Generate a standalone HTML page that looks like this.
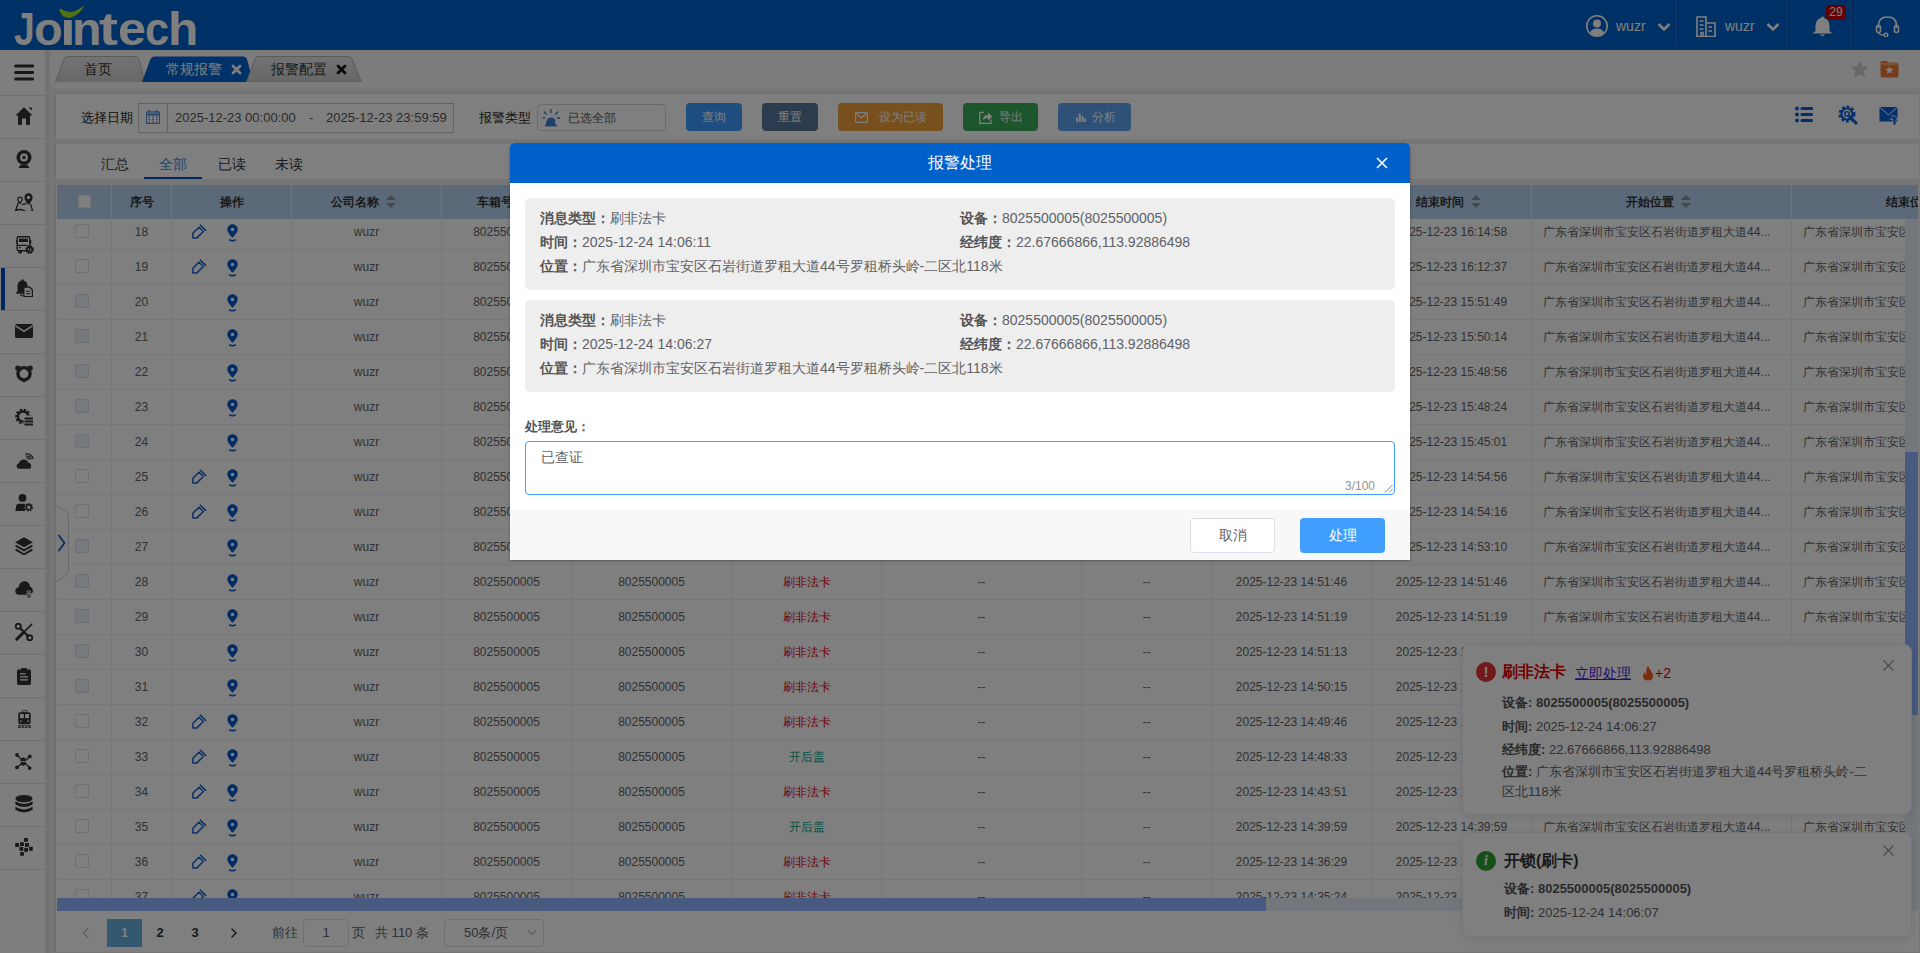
<!DOCTYPE html>
<html><head><meta charset="utf-8">
<style>
*{box-sizing:border-box;margin:0;padding:0}
html,body{width:1920px;height:953px;overflow:hidden}
body{font-family:"Liberation Sans",sans-serif;font-size:13px;color:#333;background:#ececec;position:relative}
.abs{position:absolute}
#header{left:0;top:0;width:1920px;height:50px;background:#0062cc}
#logo{position:absolute;left:0;top:-1.5px;color:#fff;font-weight:bold;font-size:46px;line-height:60px;white-space:nowrap}
.hdiv{position:absolute;top:0;width:2px;height:47px;background:#004cab;border-left:1px solid #1e6edc}
.hname{position:absolute;color:#fff;font-size:14px;top:18px}
#sidebar{left:0;top:50px;width:45px;height:903px;background:#fdfdfd}
#sidestrip{left:45px;top:50px;width:5px;height:903px;background:#e4e4e4}
.sitem{position:absolute;left:0;width:45px;height:43px;border-bottom:1px solid #dfe4ea}
.sitem svg{position:absolute}
.sitem.active:before{content:"";position:absolute;left:1px;top:0;width:4px;height:42px;background:#0050c0}
#tabbar{left:50px;top:50px;width:1870px;height:38px;background:#f8f8f8}
.tab{position:absolute;top:56px;height:26px;font-size:14px;line-height:26px;color:#333}
.tab svg{position:absolute;left:0;top:0}
.tab span{position:absolute;top:0;white-space:nowrap}
#panel1{left:55px;top:93px;width:1864px;height:46px;background:#fff;border-left:1px solid #d8d8d8;border-top:1px solid #dadada}
#panel2{left:55px;top:144px;width:1864px;height:35px;background:#fff;border-left:1px solid #d8d8d8}
#panel3{left:55px;top:185px;width:1864px;height:767px;background:#fff;border-left:1px solid #d8d8d8}
.lbl{position:absolute;font-size:13px;color:#222;top:109px;white-space:nowrap}
.btn{position:absolute;top:103px;height:28px;border-radius:4px;color:#fff;font-size:12px;text-align:center;line-height:28px;white-space:nowrap}
.btn svg{vertical-align:-2px;margin-right:6px}
.stab{position:absolute;top:156px;font-size:14px;color:#333}
#thead{position:absolute;left:57px;top:185px;width:1861px;height:34px;background:#b7d3f0;overflow:hidden}
.th{position:absolute;top:0;height:34px;line-height:34px;text-align:center;font-weight:bold;font-size:12px;color:#333;border-right:1px solid #e3ebf3;white-space:nowrap}
.sort{display:inline-block;position:relative;width:24px;height:14px;vertical-align:-3px}
.sort i{position:absolute;left:7px;width:0;height:0;border-left:5px solid transparent;border-right:5px solid transparent}
.sort .up{top:0;border-bottom:5px solid #8a8f96}
.sort .dn{top:8px;border-top:5px solid #8a8f96}
#tbody{position:absolute;left:57px;top:219px;width:1848px;height:679px;overflow:hidden;background:#fff}
.tr{position:absolute;left:0;width:2000px;height:35px;border-bottom:1px solid #ebeef5}
.td{position:absolute;top:0;height:34px;line-height:34px;text-align:center;font-size:12px;color:#606266;border-right:1px solid #ebeef5;white-space:nowrap;overflow:hidden}
.td.red{color:#e00000}
.td.green{color:#0aa58a}
.td.loc{text-align:left;padding-left:11px}
.cb{position:absolute;left:18px;top:9px;width:14px;height:14px;border:1px solid #dcdfe6;border-radius:2px;background:#fff}
.cb.dis{background:#edf2fc;border-color:#dcdfe6}
.hcb{left:20.5px;top:9.5px;width:13px;height:13px;border-color:#e8e8e8;background:#fff;border-radius:1px}
.ops{text-align:left}
.ops .pen{position:absolute;left:19.6px;top:9px}
.ops .pin{position:absolute;left:54.6px;top:8.6px}
.ops svg{display:block}
#vscroll{position:absolute;left:1905px;top:219px;width:13px;height:692px;background:#e6ecf6}
#vthumb{position:absolute;left:1905px;top:452px;width:13px;height:263px;background:#90b4fe}
#hscroll{position:absolute;left:57px;top:898px;width:1848px;height:13px;background:#e6ecf6}
#hthumb{position:absolute;left:57px;top:898px;width:1209px;height:13px;background:#90b4fe}
.pg{position:absolute;top:919px;height:28px;line-height:28px;font-size:13px;color:#333;text-align:center;white-space:nowrap}
#overlay{left:0;top:0;width:1920px;height:953px;background:rgba(0,0,0,.5)}
.notif{position:absolute;left:1462px;width:450px;background:#fff;border-radius:8px;box-shadow:0 2px 12px rgba(0,0,0,.1);border:1px solid #ebeef5}
.nico{position:absolute;left:13px;width:20px;height:20px;border-radius:50%;color:#fff;text-align:center;font-weight:bold}
.ntitle{position:absolute;font-size:16px;font-weight:bold;white-space:nowrap}
.nclose{position:absolute;left:420px}
.nline{position:absolute;left:39px;font-size:13px;color:#606266;white-space:nowrap}
.nline b{color:#555}
#modal{position:absolute;left:510px;top:143px;width:900px;height:417px;background:#fff;border-radius:4px 4px 0 0;box-shadow:0 1px 3px rgba(0,0,0,.3)}
#mhead{position:absolute;left:0;top:0;width:900px;height:40px;background:#0061cb;border-radius:4px 4px 0 0;color:#fff;font-size:16px;text-align:center;line-height:40px}
.card{position:absolute;left:15px;width:870px;height:92px;background:#eeeeee;border-radius:5px}
.cline{position:absolute;font-size:14px;color:#606266;white-space:nowrap;line-height:24px}
.cline b{color:#555}
#mfoot{position:absolute;left:0;top:367px;width:900px;height:50px;background:#f8f8f8}
.mbtn{position:absolute;top:8px;width:85px;height:35px;border-radius:4px;font-size:14px;text-align:center;line-height:33px}
</style></head><body>
<div id="header" class="abs">
  <div id="logo"><span style="position:absolute;left:14.2px;top:0;transform:scaleX(0.81);transform-origin:0 0">J</span><span style="position:absolute;left:33.5px;top:0;transform:scaleX(1.02);transform-origin:0 0">o</span><span style="position:absolute;left:59.5px;top:0;transform:scaleX(1.23);transform-origin:0 0">ı</span><span style="position:absolute;left:71.7px;top:0;transform:scaleX(1.05);transform-origin:0 0">n</span><span style="position:absolute;left:99.3px;top:0;transform:scaleX(1.24);transform-origin:0 0">t</span><span style="position:absolute;left:117.6px;top:0;transform:scaleX(1.1);transform-origin:0 0">e</span><span style="position:absolute;left:144.7px;top:0;transform:scaleX(0.94);transform-origin:0 0">c</span><span style="position:absolute;left:168.1px;top:0;transform:scaleX(1.08);transform-origin:0 0">h</span></div>
  <svg class="abs" style="left:57px;top:3px" width="30" height="17" viewBox="0 0 30 17"><path d="M2.5 8 Q1.5 5 4.5 6 Q8.5 9 13 9 Q20 8.5 27.5 2 Q23.5 11.5 13 15 Q5.5 15.5 2.5 8 Z" fill="#a8e028"/></svg>
  <!-- user -->
  <svg class="abs" style="left:1586px;top:15px" width="22" height="22" viewBox="0 0 22 22"><circle cx="11" cy="11" r="10.2" fill="none" stroke="#fff" stroke-width="1.6"/><circle cx="11" cy="8.5" r="4" fill="#fff"/><path d="M4 17.5 Q6 13.5 11 13.5 Q16 13.5 18 17.5 Q15 21 11 21 Q7 21 4 17.5 Z" fill="#fff"/></svg>
  <div class="hname" style="left:1616px">wuzr</div>
  <svg class="abs" style="left:1657px;top:22px" width="14" height="10" viewBox="0 0 14 10"><path d="M1.5 2 L7 7.5 L12.5 2" fill="none" stroke="#fff" stroke-width="2.6"/></svg>
  <div class="hdiv" style="left:1676px"></div>
  <svg class="abs" style="left:1696px;top:16px" width="20" height="21" viewBox="0 0 20 21"><path d="M1 20.5 V1 H10 V20.5 M10 7 H19 V20.5 M0 20.5 H20" fill="none" stroke="#fff" stroke-width="1.6"/><path d="M3.5 5 H7.5 M3.5 9 H7.5 M3.5 13 H7.5 M12.5 11 H16 M12.5 15 H16 M5 20 V16.5 H7 V20" stroke="#fff" stroke-width="1.5" fill="none"/></svg>
  <div class="hname" style="left:1725px">wuzr</div>
  <svg class="abs" style="left:1766px;top:22px" width="14" height="10" viewBox="0 0 14 10"><path d="M1.5 2 L7 7.5 L12.5 2" fill="none" stroke="#fff" stroke-width="2.6"/></svg>
  <div class="hdiv" style="left:1787px"></div>
  <svg class="abs" style="left:1811px;top:15px" width="23" height="22" viewBox="0 0 23 22"><path d="M11.5 1.5 Q13 1.5 13 3 Q18.5 4.5 18.5 11 L18.5 16 L21.5 18.5 L1.5 18.5 L4.5 16 L4.5 11 Q4.5 4.5 10 3 Q10 1.5 11.5 1.5 Z" fill="#fff"/><path d="M9 19.5 Q11.5 22.5 14 19.5 Z" fill="#fff"/></svg>
  <div class="abs" style="left:1826px;top:5px;width:20px;height:15px;border-radius:4px;background:#cc0000;color:#fff;font-size:12px;line-height:15px;text-align:center">29</div>
  <div class="hdiv" style="left:1851px"></div>
  <svg class="abs" style="left:1875px;top:15px" width="25" height="22" viewBox="0 0 25 22"><path d="M3.5 13 V10.5 Q3.5 2 12.5 2 Q21.5 2 21.5 10.5 V13" fill="none" stroke="#fff" stroke-width="1.7"/><rect x="1.5" y="10.5" width="4" height="7" rx="2" fill="none" stroke="#fff" stroke-width="1.6"/><rect x="19.5" y="10.5" width="4" height="7" rx="2" fill="none" stroke="#fff" stroke-width="1.6"/><path d="M3.5 17.5 Q4.5 20 9 20" fill="none" stroke="#fff" stroke-width="1.5"/><circle cx="11" cy="20" r="1.8" fill="none" stroke="#fff" stroke-width="1.4"/></svg>
</div>
<div id="sidebar" class="abs"><div class="sitem" style="top:0;height:46px"><svg style="left:14px;top:14px" width="20" height="17" viewBox="0 0 20 17"><path d="M1.7 2 H18.8 M1.7 8.5 H18.8 M1.7 15 H18.8" stroke="#333" stroke-width="3.1" stroke-linecap="round"/></svg></div><div class="sitem" style="top:46px"><svg style="left:15px;top:11px" width="18" height="18" viewBox="0 0 18 18"><path d="M9 0.3 L17.6 8.6 L15 8.6 L15 16.8 Q15 18 13.8 18 L12.2 18 Q11 18 11 16.8 L11 11.5 L7 11.5 L7 16.8 Q7 18 5.8 18 L4.2 18 Q3 18 3 16.8 L3 8.6 L0.4 8.6 Z" fill="#333"/><path d="M13.6 0.4 L16.8 0.4 L16.8 3.6 Z" fill="#333"/></svg></div><div class="sitem" style="top:89px"><svg style="left:16px;top:11px" width="16" height="18" viewBox="0 0 16 18"><circle cx="8" cy="7.5" r="7.5" fill="#333"/><circle cx="8" cy="7.5" r="3.9" fill="#fdfdfd"/><circle cx="8" cy="7.5" r="1.7" fill="#333"/><path d="M2.5 18 L4.5 15 L11.5 15 L13.5 18 Z" fill="#333"/></svg></div><div class="sitem" style="top:132px"><svg style="left:15px;top:11px" width="18" height="18" viewBox="0 0 18 18"><path d="M13.5 0.3 C11 0.3 9.4 2.2 9.4 4.5 C9.4 7.6 13.5 12 13.5 12 C13.5 12 17.6 7.6 17.6 4.5 C17.6 2.2 16 0.3 13.5 0.3 Z" fill="#333"/><circle cx="13.5" cy="4.5" r="1.7" fill="#fdfdfd"/><path d="M5 4.2 C3.7 4.2 2.8 5.1 2.8 6.3 C2.8 7.9 5 10.4 5 10.4 C5 10.4 7.2 7.9 7.2 6.3 C7.2 5.1 6.3 4.2 5 4.2 Z" fill="none" stroke="#333" stroke-width="1.3"/><path d="M3.3 9.8 L0.6 17.6 Q4.8 15.4 9 17.6 Q13.4 19.8 17.5 17.6 L15.6 10.8 M6.6 11 Q9 12 11.2 10.2" fill="none" stroke="#333" stroke-width="1.3"/></svg></div><div class="sitem" style="top:175px"><svg style="left:16px;top:11px" width="18" height="18" viewBox="0 0 18 18"><rect x="1.2" y="0.7" width="12.6" height="14" rx="1.4" fill="none" stroke="#333" stroke-width="1.4"/><rect x="3" y="2.6" width="9" height="3.4" fill="#333"/><path d="M0.3 4 V7.5 M14.7 4 V7.5" stroke="#333" stroke-width="1.2"/><path d="M1.5 9.3 H11 M3 11.7 H5" stroke="#333" stroke-width="1.3"/><rect x="2.4" y="14.6" width="3.4" height="2.8" rx="1" fill="#333"/><circle cx="13.6" cy="13.6" r="3.3" fill="none" stroke="#333" stroke-width="2.2" stroke-dasharray="1.6 1.0"/><circle cx="13.6" cy="13.6" r="2.6" fill="none" stroke="#333" stroke-width="1.5"/></svg></div><div class="sitem active" style="top:218px"><svg style="left:15px;top:11px" width="18" height="18" viewBox="0 0 18 18"><path d="M7.5 0.3 Q8.6 0.3 8.6 1.4 Q12.5 2.5 12.5 7 L12.5 9 L9 9 L9 14.8 L0.3 14.8 Q1.3 13.4 2.5 12.2 L2.5 7 Q2.5 2.5 6.4 1.4 Q6.4 0.3 7.5 0.3 Z" fill="#333"/><ellipse cx="6.3" cy="16.3" rx="1.3" ry="0.9" fill="#333"/><path d="M8.8 8.2 H14.8 L17.4 10.8 V17.6 H8.8 Z" fill="#fdfdfd" stroke="#333" stroke-width="1.3"/><path d="M11 12.3 H15.3 M11 14.8 H15.3" stroke="#333" stroke-width="1.1"/></svg></div><div class="sitem" style="top:261px"><svg style="left:15px;top:13px" width="18" height="14" viewBox="0 0 18 14"><rect x="0" y="0" width="18" height="14" rx="1.6" fill="#333"/><path d="M0.3 1.6 L9 7.4 L17.7 1.6" fill="none" stroke="#fdfdfd" stroke-width="1.4"/></svg></div><div class="sitem" style="top:304px"><svg style="left:15px;top:11px" width="18" height="18" viewBox="0 0 18 18"><circle cx="9" cy="8.8" r="6.1" fill="none" stroke="#333" stroke-width="3.3"/><circle cx="2.8" cy="3" r="2.6" fill="#333"/><circle cx="15.2" cy="3" r="2.6" fill="#333"/><path d="M5.8 14.5 L9 17.8 L12.2 14.5 Z" fill="#333"/></svg></div><div class="sitem" style="top:347px"><svg style="left:15px;top:11px" width="18" height="18" viewBox="0 0 18 18"><circle cx="8" cy="8.5" r="6.3" fill="none" stroke="#333" stroke-width="3" stroke-dasharray="2.2 1.5"/><circle cx="8" cy="8.5" r="5" fill="none" stroke="#333" stroke-width="2.4"/><rect x="8.5" y="7.5" width="10" height="11" fill="#fdfdfd"/><path d="M9.5 10.5 H18 M9.5 13.5 H18 M9.5 16.6 H18" stroke="#333" stroke-width="2"/></svg></div><div class="sitem" style="top:390px"><svg style="left:15px;top:11px" width="19" height="18" viewBox="0 0 19 18"><path d="M4.5 17.8 Q1.6 17.8 1.6 15 Q1.6 12.6 4 12.2 Q5 8.5 8.6 8.5 Q12.2 8.5 13.2 11.7 Q16.2 11.9 16.2 14.9 Q16.2 17.8 13.2 17.8 Z" fill="#333"/><path d="M11.35 7.1 A2.5 2.5 0 0 1 14.4 8.85 M10.84 5.15 A4.5 4.5 0 0 1 16.35 8.34 M10.4 3.2 A6.3 6.3 0 0 1 18.2 7.9" fill="none" stroke="#333" stroke-width="1.2"/></svg></div><div class="sitem" style="top:433px"><svg style="left:15px;top:11px" width="18" height="18" viewBox="0 0 18 18"><circle cx="7.5" cy="3.9" r="3.9" fill="#333"/><path d="M0.3 17 L1.2 11.8 Q1.6 9.8 3.8 9.8 L10.5 9.8 L10 17 Z" fill="#333"/><circle cx="13.8" cy="13.2" r="4.2" fill="#fdfdfd"/><circle cx="13.8" cy="13.2" r="3.3" fill="none" stroke="#333" stroke-width="2" stroke-dasharray="1.5 1.0"/><circle cx="13.8" cy="13.2" r="2.4" fill="none" stroke="#333" stroke-width="1.4"/></svg></div><div class="sitem" style="top:476px"><svg style="left:15px;top:11px" width="18" height="18" viewBox="0 0 18 18"><path d="M9 0.2 L18 5.2 L9 10.2 L0 5.2 Z" fill="#333"/><path d="M0.6 8.6 L9 13.3 L17.4 8.6 M0.6 12.6 L9 17.3 L17.4 12.6" fill="none" stroke="#333" stroke-width="1.9"/></svg></div><div class="sitem" style="top:519px"><svg style="left:15px;top:11.6px" width="18" height="17" viewBox="0 0 18 17"><path d="M4 13.8 Q0.3 13.8 0.3 10 Q0.3 6.6 3.6 6.2 Q4.6 0.3 9.6 0.3 Q14.4 0.3 15 5.8 Q17.7 6.5 17.7 9.8 Q17.7 13.8 13.5 13.8 Z" fill="#333"/><path d="M12 10.5 L16 10.5 M12 10.5 L14 15 M16 10.5 L14 15" stroke="#fdfdfd" stroke-width="2.6"/><circle cx="12" cy="10.5" r="1.4" fill="none" stroke="#333" stroke-width="0.9"/><circle cx="16" cy="10.5" r="1.4" fill="none" stroke="#333" stroke-width="0.9"/><circle cx="14" cy="15" r="1.4" fill="none" stroke="#333" stroke-width="0.9"/></svg></div><div class="sitem" style="top:562px"><svg style="left:15px;top:11px" width="18" height="18" viewBox="0 0 18 18"><path d="M4.5 4.5 L14 14" stroke="#333" stroke-width="2.4"/><circle cx="3.3" cy="3.3" r="2.6" fill="none" stroke="#333" stroke-width="1.9"/><circle cx="14.7" cy="14.7" r="2.6" fill="none" stroke="#333" stroke-width="1.9"/><path d="M1.8 16.3 L8 10" stroke="#333" stroke-width="3" stroke-linecap="round"/><path d="M9.5 8.5 L16.6 1.4" stroke="#333" stroke-width="1.7" stroke-linecap="round"/></svg></div><div class="sitem" style="top:605px"><svg style="left:17px;top:12.7px" width="14" height="17" viewBox="0 0 14 17"><rect x="0" y="1.3" width="14" height="15.7" rx="1.8" fill="#333"/><rect x="4" y="0" width="6" height="2.4" rx="0.8" fill="#333"/><path d="M3.2 1.9 H4 M10 1.9 H10.8" stroke="#fdfdfd" stroke-width="0.8"/><path d="M3 5.8 H8.5 M3 8.9 H11 M3 11.9 H11" stroke="#fdfdfd" stroke-width="1.3"/></svg></div><div class="sitem" style="top:648px"><svg style="left:18px;top:11.7px" width="13" height="18" viewBox="0 0 13 18"><rect x="4.2" y="0.3" width="4.6" height="2.6" rx="1.2" fill="none" stroke="#333" stroke-width="1"/><rect x="0.3" y="2.3" width="12.4" height="12" rx="1.8" fill="#333"/><rect x="2" y="4" width="3.8" height="4.2" fill="#fdfdfd"/><rect x="7.2" y="4" width="3.8" height="4.2" fill="#fdfdfd"/><rect x="2" y="10.5" width="1.8" height="1.3" fill="#fdfdfd"/><rect x="9.2" y="10.5" width="1.8" height="1.3" fill="#fdfdfd"/><path d="M0 15.8 H13 M0 17.3 H13" stroke="#333" stroke-width="1.1"/><path d="M3.5 15 V18 M6.5 15 V18 M9.5 15 V18" stroke="#fdfdfd" stroke-width="0.6"/></svg></div><div class="sitem" style="top:691px"><svg style="left:15px;top:12px" width="17" height="17" viewBox="0 0 17 17"><path d="M2 2 L15 15 M15 3.5 L2 14.5" stroke="#333" stroke-width="1.3"/><circle cx="2" cy="2" r="1.9" fill="#333"/><circle cx="14.8" cy="3.4" r="1.9" fill="#333"/><circle cx="2" cy="14.4" r="1.9" fill="#333"/><circle cx="14.6" cy="15.1" r="1.9" fill="#333"/><ellipse cx="8.3" cy="8.6" rx="2.8" ry="4.1" fill="#333"/><path d="M5.5 8.6 H11.1" stroke="#fdfdfd" stroke-width="0.9"/></svg></div><div class="sitem" style="top:734px"><svg style="left:15px;top:10.6px" width="18" height="19" viewBox="0 0 18 19"><ellipse cx="9" cy="3.6" rx="8.6" ry="3.6" fill="#333"/><path d="M0.4 6.3 Q9 11.5 17.6 6.3 L17.6 9.6 Q9 14.6 0.4 9.6 Z M0.4 11.8 Q9 17 17.6 11.8 L17.6 14.8 Q9 20 0.4 14.8 Z" fill="#333"/></svg></div><div class="sitem" style="top:777px"><svg style="left:15px;top:11px" width="18" height="18" viewBox="0 0 18 18"><g fill="#333"><rect x="9" y="0" width="3.9" height="3.8"/><rect x="0.2" y="5" width="3.8" height="3.9"/><rect x="5" y="4.3" width="3.9" height="3.8"/><rect x="10" y="5" width="4" height="3.9"/><rect x="4.4" y="9" width="3.9" height="3.8"/><rect x="9.2" y="9.9" width="3.8" height="3.9"/><rect x="14.1" y="8.8" width="3.7" height="3.9"/><rect x="5.2" y="14" width="3.7" height="3.8"/></g></svg></div></div>
<div id="sidestrip" class="abs"></div>
<div id="tabbar" class="abs"></div>
<!-- tabs -->
<div class="tab" style="left:55px;width:90px">
  <svg width="90" height="26" viewBox="0 0 90 26"><path d="M0.5 26 L9 3 Q10 0.5 13 0.5 L80 0.5 Q83 0.5 84 3 L90 26 Z" fill="#dcdcdc" stroke="#b5b5b5"/><defs><linearGradient id="g1" x1="0" y1="0" x2="0" y2="1"><stop offset="0" stop-color="#e6e6e6"/><stop offset="1" stop-color="#cfcfcf"/></linearGradient></defs><path d="M1 26 L9.5 3.2 Q10.5 1 13 1 L80 1 Q82.5 1 83.5 3.2 L89.5 26 Z" fill="url(#g1)"/></svg>
  <span style="left:29px">首页</span>
</div>
<div class="tab" style="left:142px;width:110px">
  <svg width="110" height="26" viewBox="0 0 110 26"><path d="M0 26 L8.5 3 Q9.5 0.5 12.5 0.5 L101 0.5 Q104 0.5 105 3 L109.5 20 Q110 26 104 26 Z" fill="#0063d1"/></svg>
  <span style="left:23.5px;color:#fff">常规报警</span>
  <svg style="left:89px;top:8px" width="11" height="11" viewBox="0 0 11 11"><path d="M2 2 L9 9 M9 2 L2 9" stroke="#fff" stroke-width="2.8" stroke-linecap="round"/></svg>
</div>
<div class="tab" style="left:246px;width:116px">
  <svg width="116" height="26" viewBox="0 0 116 26"><defs><linearGradient id="g2" x1="0" y1="0" x2="0" y2="1"><stop offset="0" stop-color="#e6e6e6"/><stop offset="1" stop-color="#cfcfcf"/></linearGradient></defs><path d="M0.5 26 L9 3 Q10 0.5 13 0.5 L102 0.5 Q105 0.5 106 3 L115.5 26 Z" fill="url(#g2)" stroke="#b5b5b5"/></svg>
  <span style="left:25px">报警配置</span>
  <svg style="left:90px;top:8px" width="11" height="11" viewBox="0 0 11 11"><path d="M2 2 L9 9 M9 2 L2 9" stroke="#111" stroke-width="2.8" stroke-linecap="round"/></svg>
</div>
<svg class="abs" style="left:1850px;top:60px" width="19" height="18" viewBox="0 0 19 18"><path d="M9.5 0.5 L12 6.3 L18.5 6.8 L13.5 11 L15.2 17.5 L9.5 14 L3.8 17.5 L5.5 11 L0.5 6.8 L7 6.3 Z" fill="#cfcfcf"/></svg>
<svg class="abs" style="left:1880px;top:60px" width="19" height="18" viewBox="0 0 19 18"><path d="M0.5 3 Q0.5 1 2.5 1 L7 1 L8.5 2.5 L16.5 2.5 Q18.5 2.5 18.5 4.5 L18.5 15.5 Q18.5 17.5 16.5 17.5 L2.5 17.5 Q0.5 17.5 0.5 15.5 Z" fill="#f07838"/><path d="M0.5 4 H18.5" stroke="#ffd9a8" stroke-width="1"/><path d="M9.5 6 L10.7 8.8 L13.6 9 L11.3 10.9 L12.1 13.8 L9.5 12.2 L6.9 13.8 L7.7 10.9 L5.4 9 L8.3 8.8 Z" fill="#fff"/></svg>
<div id="panel1" class="abs"></div>
<div class="lbl" style="left:81px">选择日期</div>
<div class="abs" style="left:138px;top:103px;width:316px;height:30px;border:1px solid #c6c6c6;background:#fff"></div>
<div class="abs" style="left:167px;top:104px;width:1px;height:28px;background:#c6c6c6"></div>
<svg class="abs" style="left:146px;top:110px" width="14" height="14" viewBox="0 0 14 14"><rect x="0.5" y="2" width="13" height="11.5" fill="none" stroke="#4a8ad8" stroke-width="1"/><path d="M0.5 4.5 H13.5" stroke="#4a8ad8" stroke-width="2"/><circle cx="3.5" cy="1.5" r="1.2" fill="#4a8ad8"/><circle cx="10.5" cy="1.5" r="1.2" fill="#4a8ad8"/><path d="M2.5 7 H4 M6.2 7 H7.8 M10 7 H11.5 M2.5 9.5 H4 M6.2 9.5 H7.8 M10 9.5 H11.5 M2.5 12 H4 M6.2 12 H7.8 M10 12 H11.5" stroke="#4a8ad8" stroke-width="1.3"/></svg>
<div class="abs" style="left:175px;top:110px;font-size:13px;color:#555;white-space:nowrap">2025-12-23 00:00:00</div>
<div class="abs" style="left:309px;top:110px;font-size:13px;color:#555">-</div>
<div class="abs" style="left:326px;top:110px;font-size:13px;color:#555;white-space:nowrap">2025-12-23 23:59:59</div>
<div class="lbl" style="left:479px">报警类型</div>
<div class="abs" style="left:537px;top:104px;width:129px;height:27px;border:1px solid #d5d5d5;border-radius:4px;background:#fff"></div>
<svg class="abs" style="left:542px;top:108px" width="19" height="19" viewBox="0 0 19 19"><path d="M4 17 Q4 9.5 9 9.5 Q13.5 9.5 13.5 14 L13.5 17 Z" fill="#3d7fd4"/><path d="M3 17.5 H15" stroke="#3d7fd4" stroke-width="1.8"/><path d="M9 1 V5 M2 3.5 L4.5 6.5 M16 3.5 L13.5 6.5 M0.5 10 H3 M15 10 H18" stroke="#3d7fd4" stroke-width="1.4"/><path d="M13 12 H17 M13 14 H17 M13 16 H17" stroke="#fff" stroke-width="0.8"/></svg>
<div class="abs" style="left:568px;top:109.5px;font-size:12px;color:#555;white-space:nowrap">已选全部</div>
<div class="btn" style="left:686px;width:56px;background:#3d9bff">查询</div>
<div class="btn" style="left:762px;width:56px;background:#58769b">重置</div>
<div class="btn" style="left:838px;width:105px;background:#eea13c"><svg class="abs" style="left:17px;top:9px" width="13" height="11" viewBox="0 0 13 11"><rect x="0.6" y="0.6" width="11.8" height="9.8" rx="1" fill="none" stroke="#fff" stroke-width="1.2"/><path d="M0.8 1.2 L6.5 5.8 L12.2 1.2" fill="none" stroke="#fff" stroke-width="1.2"/></svg><span class="abs" style="left:41px;top:0">设为已读</span></div>
<div class="btn" style="left:963px;width:75px;background:#3aab58"><svg class="abs" style="left:16px;top:8px" width="14" height="13" viewBox="0 0 14 13"><path d="M5 1.3 H0.7 V12.3 H12 V8.5" fill="none" stroke="#fff" stroke-width="1.3"/><path d="M3.8 9 Q4 4 9 4 V1.5 L13.5 5.5 L9 9.5 V7 Q5.8 7 3.8 9 Z" fill="#fff"/></svg><span class="abs" style="left:36px;top:0">导出</span></div>
<div class="btn" style="left:1058px;width:73px;background:#5fa3f0"><svg class="abs" style="left:17.5px;top:10px" width="10" height="9" viewBox="0 0 10 9"><path d="M1 9 V4.5 M3.8 9 V0.5 M6.6 9 V3 M9.2 9 V5.5" stroke="#fff" stroke-width="2"/></svg><span class="abs" style="left:34px;top:0">分析</span></div>
<svg class="abs" style="left:1795px;top:106px" width="18" height="17" viewBox="0 0 18 17"><circle cx="2" cy="2.5" r="2" fill="#0d5fd1"/><circle cx="2" cy="8.5" r="2" fill="#0d5fd1"/><circle cx="2" cy="14.5" r="2" fill="#0d5fd1"/><path d="M7 2.5 H16.5 M7 8.5 H16.5 M7 14.5 H16.5" stroke="#0d5fd1" stroke-width="3.2" stroke-linecap="round"/></svg>
<svg class="abs" style="left:1838px;top:105px" width="21" height="20" viewBox="0 0 21 20"><circle cx="9" cy="9" r="6.8" fill="none" stroke="#0d5fd1" stroke-width="3.4" stroke-dasharray="2.6 1.9"/><circle cx="9" cy="9" r="5.5" fill="none" stroke="#0d5fd1" stroke-width="2.2"/><circle cx="9" cy="9" r="2.2" fill="none" stroke="#0d5fd1" stroke-width="1.6"/><path d="M11 11 L19 19" stroke="#0d5fd1" stroke-width="3"/></svg>
<svg class="abs" style="left:1879px;top:106px" width="20" height="19" viewBox="0 0 20 19"><rect x="0.5" y="1" width="18" height="14.5" fill="#0d5fd1"/><path d="M0.5 1 L9.5 9 L18.5 1" fill="none" stroke="#fff" stroke-width="1"/><path d="M14 9 L19.5 13.5 L17 13.5 L17 19 L14 19 L14 13.5 L11.5 13.5 Z" fill="#0d5fd1" stroke="#fff" stroke-width="0.8"/></svg>

<div id="panel2" class="abs"></div><div id="panel3" class="abs"></div>
<div class="stab" style="left:101px">汇总</div>
<div class="stab" style="left:159px;color:#3a8ee6">全部</div>
<div class="stab" style="left:218px">已读</div>
<div class="stab" style="left:275px">未读</div>
<div class="abs" style="left:144px;top:177px;width:58px;height:2px;background:#0050c0"></div>
<div id="thead"><div class="th" style="left:0px;width:55px"><span class="cb hcb"></span></div><div class="th" style="left:55px;width:60px">序号</div><div class="th" style="left:115px;width:120px">操作</div><div class="th" style="left:235px;width:150px">公司名称<span class="sort"><i class="up"></i><i class="dn"></i></span></div><div class="th" style="left:385px;width:130px">车箱号<span class="sort"><i class="up"></i><i class="dn"></i></span></div><div class="th" style="left:515px;width:160px">设备号<span class="sort"><i class="up"></i><i class="dn"></i></span></div><div class="th" style="left:675px;width:150px">报警类型</div><div class="th" style="left:825px;width:200px">报警内容</div><div class="th" style="left:1025px;width:130px">处理人</div><div class="th" style="left:1155px;width:160px">开始时间<span class="sort"><i class="up"></i><i class="dn"></i></span></div><div class="th" style="left:1315px;width:160px">结束时间<span class="sort"><i class="up"></i><i class="dn"></i></span></div><div class="th" style="left:1475px;width:260px">开始位置<span class="sort"><i class="up"></i><i class="dn"></i></span></div><div class="th" style="left:1735px;width:260px">结束位置<span class="sort"><i class="up"></i><i class="dn"></i></span></div></div>
<div id="tbody"><div class="tr" style="top:-4px"><div class="td" style="left:0;width:55px"><span class="cb"></span></div><div class="td" style="left:55px;width:60px">18</div><div class="td ops" style="left:115px;width:120px"><span class="pen"><svg width="15" height="15" viewBox="0 0 15 15"><path d="M0.9 9.3 L7 3.2 L11.3 7.5 L4.7 14.1 L0.9 14.1 Z" fill="none" stroke="#1260d0" stroke-width="1.5" stroke-linejoin="round"/><path d="M8.4 1.2 L13.6 6.4" stroke="#1260d0" stroke-width="1.6" stroke-linecap="round"/></svg></span><span class="pin"><svg width="11" height="18" viewBox="0 0 11 18"><path d="M5.5 0.3 C2.5 0.3 0.3 2.6 0.3 5.5 C0.3 8.6 5.5 13.8 5.5 13.8 C5.5 13.8 10.7 8.6 10.7 5.5 C10.7 2.6 8.5 0.3 5.5 0.3 Z" fill="#0858c8"/><circle cx="5.5" cy="5.5" r="1.7" fill="#fff"/><path d="M2.2 15.6 Q5.5 17.9 8.8 15.6" stroke="#0858c8" stroke-width="1.6" fill="none"/></svg></span></div><div class="td" style="left:235px;width:150px">wuzr</div><div class="td" style="left:385px;width:130px">8025500005</div><div class="td" style="left:515px;width:160px">8025500005</div><div class="td red" style="left:675px;width:150px">刷非法卡</div><div class="td" style="left:825px;width:200px">--</div><div class="td" style="left:1025px;width:130px">--</div><div class="td" style="left:1155px;width:160px">2025-12-23 16:14:58</div><div class="td" style="left:1315px;width:160px">2025-12-23 16:14:58</div><div class="td loc" style="left:1475px;width:260px">广东省深圳市宝安区石岩街道罗租大道44...</div><div class="td loc" style="left:1735px;width:260px">广东省深圳市宝安区石岩街道罗租大道44...</div></div><div class="tr" style="top:31px"><div class="td" style="left:0;width:55px"><span class="cb"></span></div><div class="td" style="left:55px;width:60px">19</div><div class="td ops" style="left:115px;width:120px"><span class="pen"><svg width="15" height="15" viewBox="0 0 15 15"><path d="M0.9 9.3 L7 3.2 L11.3 7.5 L4.7 14.1 L0.9 14.1 Z" fill="none" stroke="#1260d0" stroke-width="1.5" stroke-linejoin="round"/><path d="M8.4 1.2 L13.6 6.4" stroke="#1260d0" stroke-width="1.6" stroke-linecap="round"/></svg></span><span class="pin"><svg width="11" height="18" viewBox="0 0 11 18"><path d="M5.5 0.3 C2.5 0.3 0.3 2.6 0.3 5.5 C0.3 8.6 5.5 13.8 5.5 13.8 C5.5 13.8 10.7 8.6 10.7 5.5 C10.7 2.6 8.5 0.3 5.5 0.3 Z" fill="#0858c8"/><circle cx="5.5" cy="5.5" r="1.7" fill="#fff"/><path d="M2.2 15.6 Q5.5 17.9 8.8 15.6" stroke="#0858c8" stroke-width="1.6" fill="none"/></svg></span></div><div class="td" style="left:235px;width:150px">wuzr</div><div class="td" style="left:385px;width:130px">8025500005</div><div class="td" style="left:515px;width:160px">8025500005</div><div class="td red" style="left:675px;width:150px">刷非法卡</div><div class="td" style="left:825px;width:200px">--</div><div class="td" style="left:1025px;width:130px">--</div><div class="td" style="left:1155px;width:160px">2025-12-23 16:12:37</div><div class="td" style="left:1315px;width:160px">2025-12-23 16:12:37</div><div class="td loc" style="left:1475px;width:260px">广东省深圳市宝安区石岩街道罗租大道44...</div><div class="td loc" style="left:1735px;width:260px">广东省深圳市宝安区石岩街道罗租大道44...</div></div><div class="tr" style="top:66px"><div class="td" style="left:0;width:55px"><span class="cb dis"></span></div><div class="td" style="left:55px;width:60px">20</div><div class="td ops" style="left:115px;width:120px"><span class="pin"><svg width="11" height="18" viewBox="0 0 11 18"><path d="M5.5 0.3 C2.5 0.3 0.3 2.6 0.3 5.5 C0.3 8.6 5.5 13.8 5.5 13.8 C5.5 13.8 10.7 8.6 10.7 5.5 C10.7 2.6 8.5 0.3 5.5 0.3 Z" fill="#0858c8"/><circle cx="5.5" cy="5.5" r="1.7" fill="#fff"/><path d="M2.2 15.6 Q5.5 17.9 8.8 15.6" stroke="#0858c8" stroke-width="1.6" fill="none"/></svg></span></div><div class="td" style="left:235px;width:150px">wuzr</div><div class="td" style="left:385px;width:130px">8025500005</div><div class="td" style="left:515px;width:160px">8025500005</div><div class="td red" style="left:675px;width:150px">刷非法卡</div><div class="td" style="left:825px;width:200px">--</div><div class="td" style="left:1025px;width:130px">--</div><div class="td" style="left:1155px;width:160px">2025-12-23 15:51:49</div><div class="td" style="left:1315px;width:160px">2025-12-23 15:51:49</div><div class="td loc" style="left:1475px;width:260px">广东省深圳市宝安区石岩街道罗租大道44...</div><div class="td loc" style="left:1735px;width:260px">广东省深圳市宝安区石岩街道罗租大道44...</div></div><div class="tr" style="top:101px"><div class="td" style="left:0;width:55px"><span class="cb dis"></span></div><div class="td" style="left:55px;width:60px">21</div><div class="td ops" style="left:115px;width:120px"><span class="pin"><svg width="11" height="18" viewBox="0 0 11 18"><path d="M5.5 0.3 C2.5 0.3 0.3 2.6 0.3 5.5 C0.3 8.6 5.5 13.8 5.5 13.8 C5.5 13.8 10.7 8.6 10.7 5.5 C10.7 2.6 8.5 0.3 5.5 0.3 Z" fill="#0858c8"/><circle cx="5.5" cy="5.5" r="1.7" fill="#fff"/><path d="M2.2 15.6 Q5.5 17.9 8.8 15.6" stroke="#0858c8" stroke-width="1.6" fill="none"/></svg></span></div><div class="td" style="left:235px;width:150px">wuzr</div><div class="td" style="left:385px;width:130px">8025500005</div><div class="td" style="left:515px;width:160px">8025500005</div><div class="td red" style="left:675px;width:150px">刷非法卡</div><div class="td" style="left:825px;width:200px">--</div><div class="td" style="left:1025px;width:130px">--</div><div class="td" style="left:1155px;width:160px">2025-12-23 15:50:14</div><div class="td" style="left:1315px;width:160px">2025-12-23 15:50:14</div><div class="td loc" style="left:1475px;width:260px">广东省深圳市宝安区石岩街道罗租大道44...</div><div class="td loc" style="left:1735px;width:260px">广东省深圳市宝安区石岩街道罗租大道44...</div></div><div class="tr" style="top:136px"><div class="td" style="left:0;width:55px"><span class="cb dis"></span></div><div class="td" style="left:55px;width:60px">22</div><div class="td ops" style="left:115px;width:120px"><span class="pin"><svg width="11" height="18" viewBox="0 0 11 18"><path d="M5.5 0.3 C2.5 0.3 0.3 2.6 0.3 5.5 C0.3 8.6 5.5 13.8 5.5 13.8 C5.5 13.8 10.7 8.6 10.7 5.5 C10.7 2.6 8.5 0.3 5.5 0.3 Z" fill="#0858c8"/><circle cx="5.5" cy="5.5" r="1.7" fill="#fff"/><path d="M2.2 15.6 Q5.5 17.9 8.8 15.6" stroke="#0858c8" stroke-width="1.6" fill="none"/></svg></span></div><div class="td" style="left:235px;width:150px">wuzr</div><div class="td" style="left:385px;width:130px">8025500005</div><div class="td" style="left:515px;width:160px">8025500005</div><div class="td red" style="left:675px;width:150px">刷非法卡</div><div class="td" style="left:825px;width:200px">--</div><div class="td" style="left:1025px;width:130px">--</div><div class="td" style="left:1155px;width:160px">2025-12-23 15:48:56</div><div class="td" style="left:1315px;width:160px">2025-12-23 15:48:56</div><div class="td loc" style="left:1475px;width:260px">广东省深圳市宝安区石岩街道罗租大道44...</div><div class="td loc" style="left:1735px;width:260px">广东省深圳市宝安区石岩街道罗租大道44...</div></div><div class="tr" style="top:171px"><div class="td" style="left:0;width:55px"><span class="cb dis"></span></div><div class="td" style="left:55px;width:60px">23</div><div class="td ops" style="left:115px;width:120px"><span class="pin"><svg width="11" height="18" viewBox="0 0 11 18"><path d="M5.5 0.3 C2.5 0.3 0.3 2.6 0.3 5.5 C0.3 8.6 5.5 13.8 5.5 13.8 C5.5 13.8 10.7 8.6 10.7 5.5 C10.7 2.6 8.5 0.3 5.5 0.3 Z" fill="#0858c8"/><circle cx="5.5" cy="5.5" r="1.7" fill="#fff"/><path d="M2.2 15.6 Q5.5 17.9 8.8 15.6" stroke="#0858c8" stroke-width="1.6" fill="none"/></svg></span></div><div class="td" style="left:235px;width:150px">wuzr</div><div class="td" style="left:385px;width:130px">8025500005</div><div class="td" style="left:515px;width:160px">8025500005</div><div class="td red" style="left:675px;width:150px">刷非法卡</div><div class="td" style="left:825px;width:200px">--</div><div class="td" style="left:1025px;width:130px">--</div><div class="td" style="left:1155px;width:160px">2025-12-23 15:48:24</div><div class="td" style="left:1315px;width:160px">2025-12-23 15:48:24</div><div class="td loc" style="left:1475px;width:260px">广东省深圳市宝安区石岩街道罗租大道44...</div><div class="td loc" style="left:1735px;width:260px">广东省深圳市宝安区石岩街道罗租大道44...</div></div><div class="tr" style="top:206px"><div class="td" style="left:0;width:55px"><span class="cb dis"></span></div><div class="td" style="left:55px;width:60px">24</div><div class="td ops" style="left:115px;width:120px"><span class="pin"><svg width="11" height="18" viewBox="0 0 11 18"><path d="M5.5 0.3 C2.5 0.3 0.3 2.6 0.3 5.5 C0.3 8.6 5.5 13.8 5.5 13.8 C5.5 13.8 10.7 8.6 10.7 5.5 C10.7 2.6 8.5 0.3 5.5 0.3 Z" fill="#0858c8"/><circle cx="5.5" cy="5.5" r="1.7" fill="#fff"/><path d="M2.2 15.6 Q5.5 17.9 8.8 15.6" stroke="#0858c8" stroke-width="1.6" fill="none"/></svg></span></div><div class="td" style="left:235px;width:150px">wuzr</div><div class="td" style="left:385px;width:130px">8025500005</div><div class="td" style="left:515px;width:160px">8025500005</div><div class="td red" style="left:675px;width:150px">刷非法卡</div><div class="td" style="left:825px;width:200px">--</div><div class="td" style="left:1025px;width:130px">--</div><div class="td" style="left:1155px;width:160px">2025-12-23 15:45:01</div><div class="td" style="left:1315px;width:160px">2025-12-23 15:45:01</div><div class="td loc" style="left:1475px;width:260px">广东省深圳市宝安区石岩街道罗租大道44...</div><div class="td loc" style="left:1735px;width:260px">广东省深圳市宝安区石岩街道罗租大道44...</div></div><div class="tr" style="top:241px"><div class="td" style="left:0;width:55px"><span class="cb"></span></div><div class="td" style="left:55px;width:60px">25</div><div class="td ops" style="left:115px;width:120px"><span class="pen"><svg width="15" height="15" viewBox="0 0 15 15"><path d="M0.9 9.3 L7 3.2 L11.3 7.5 L4.7 14.1 L0.9 14.1 Z" fill="none" stroke="#1260d0" stroke-width="1.5" stroke-linejoin="round"/><path d="M8.4 1.2 L13.6 6.4" stroke="#1260d0" stroke-width="1.6" stroke-linecap="round"/></svg></span><span class="pin"><svg width="11" height="18" viewBox="0 0 11 18"><path d="M5.5 0.3 C2.5 0.3 0.3 2.6 0.3 5.5 C0.3 8.6 5.5 13.8 5.5 13.8 C5.5 13.8 10.7 8.6 10.7 5.5 C10.7 2.6 8.5 0.3 5.5 0.3 Z" fill="#0858c8"/><circle cx="5.5" cy="5.5" r="1.7" fill="#fff"/><path d="M2.2 15.6 Q5.5 17.9 8.8 15.6" stroke="#0858c8" stroke-width="1.6" fill="none"/></svg></span></div><div class="td" style="left:235px;width:150px">wuzr</div><div class="td" style="left:385px;width:130px">8025500005</div><div class="td" style="left:515px;width:160px">8025500005</div><div class="td red" style="left:675px;width:150px">刷非法卡</div><div class="td" style="left:825px;width:200px">--</div><div class="td" style="left:1025px;width:130px">--</div><div class="td" style="left:1155px;width:160px">2025-12-23 14:54:56</div><div class="td" style="left:1315px;width:160px">2025-12-23 14:54:56</div><div class="td loc" style="left:1475px;width:260px">广东省深圳市宝安区石岩街道罗租大道44...</div><div class="td loc" style="left:1735px;width:260px">广东省深圳市宝安区石岩街道罗租大道44...</div></div><div class="tr" style="top:276px"><div class="td" style="left:0;width:55px"><span class="cb"></span></div><div class="td" style="left:55px;width:60px">26</div><div class="td ops" style="left:115px;width:120px"><span class="pen"><svg width="15" height="15" viewBox="0 0 15 15"><path d="M0.9 9.3 L7 3.2 L11.3 7.5 L4.7 14.1 L0.9 14.1 Z" fill="none" stroke="#1260d0" stroke-width="1.5" stroke-linejoin="round"/><path d="M8.4 1.2 L13.6 6.4" stroke="#1260d0" stroke-width="1.6" stroke-linecap="round"/></svg></span><span class="pin"><svg width="11" height="18" viewBox="0 0 11 18"><path d="M5.5 0.3 C2.5 0.3 0.3 2.6 0.3 5.5 C0.3 8.6 5.5 13.8 5.5 13.8 C5.5 13.8 10.7 8.6 10.7 5.5 C10.7 2.6 8.5 0.3 5.5 0.3 Z" fill="#0858c8"/><circle cx="5.5" cy="5.5" r="1.7" fill="#fff"/><path d="M2.2 15.6 Q5.5 17.9 8.8 15.6" stroke="#0858c8" stroke-width="1.6" fill="none"/></svg></span></div><div class="td" style="left:235px;width:150px">wuzr</div><div class="td" style="left:385px;width:130px">8025500005</div><div class="td" style="left:515px;width:160px">8025500005</div><div class="td red" style="left:675px;width:150px">刷非法卡</div><div class="td" style="left:825px;width:200px">--</div><div class="td" style="left:1025px;width:130px">--</div><div class="td" style="left:1155px;width:160px">2025-12-23 14:54:16</div><div class="td" style="left:1315px;width:160px">2025-12-23 14:54:16</div><div class="td loc" style="left:1475px;width:260px">广东省深圳市宝安区石岩街道罗租大道44...</div><div class="td loc" style="left:1735px;width:260px">广东省深圳市宝安区石岩街道罗租大道44...</div></div><div class="tr" style="top:311px"><div class="td" style="left:0;width:55px"><span class="cb dis"></span></div><div class="td" style="left:55px;width:60px">27</div><div class="td ops" style="left:115px;width:120px"><span class="pin"><svg width="11" height="18" viewBox="0 0 11 18"><path d="M5.5 0.3 C2.5 0.3 0.3 2.6 0.3 5.5 C0.3 8.6 5.5 13.8 5.5 13.8 C5.5 13.8 10.7 8.6 10.7 5.5 C10.7 2.6 8.5 0.3 5.5 0.3 Z" fill="#0858c8"/><circle cx="5.5" cy="5.5" r="1.7" fill="#fff"/><path d="M2.2 15.6 Q5.5 17.9 8.8 15.6" stroke="#0858c8" stroke-width="1.6" fill="none"/></svg></span></div><div class="td" style="left:235px;width:150px">wuzr</div><div class="td" style="left:385px;width:130px">8025500005</div><div class="td" style="left:515px;width:160px">8025500005</div><div class="td red" style="left:675px;width:150px">刷非法卡</div><div class="td" style="left:825px;width:200px">--</div><div class="td" style="left:1025px;width:130px">--</div><div class="td" style="left:1155px;width:160px">2025-12-23 14:53:10</div><div class="td" style="left:1315px;width:160px">2025-12-23 14:53:10</div><div class="td loc" style="left:1475px;width:260px">广东省深圳市宝安区石岩街道罗租大道44...</div><div class="td loc" style="left:1735px;width:260px">广东省深圳市宝安区石岩街道罗租大道44...</div></div><div class="tr" style="top:346px"><div class="td" style="left:0;width:55px"><span class="cb dis"></span></div><div class="td" style="left:55px;width:60px">28</div><div class="td ops" style="left:115px;width:120px"><span class="pin"><svg width="11" height="18" viewBox="0 0 11 18"><path d="M5.5 0.3 C2.5 0.3 0.3 2.6 0.3 5.5 C0.3 8.6 5.5 13.8 5.5 13.8 C5.5 13.8 10.7 8.6 10.7 5.5 C10.7 2.6 8.5 0.3 5.5 0.3 Z" fill="#0858c8"/><circle cx="5.5" cy="5.5" r="1.7" fill="#fff"/><path d="M2.2 15.6 Q5.5 17.9 8.8 15.6" stroke="#0858c8" stroke-width="1.6" fill="none"/></svg></span></div><div class="td" style="left:235px;width:150px">wuzr</div><div class="td" style="left:385px;width:130px">8025500005</div><div class="td" style="left:515px;width:160px">8025500005</div><div class="td red" style="left:675px;width:150px">刷非法卡</div><div class="td" style="left:825px;width:200px">--</div><div class="td" style="left:1025px;width:130px">--</div><div class="td" style="left:1155px;width:160px">2025-12-23 14:51:46</div><div class="td" style="left:1315px;width:160px">2025-12-23 14:51:46</div><div class="td loc" style="left:1475px;width:260px">广东省深圳市宝安区石岩街道罗租大道44...</div><div class="td loc" style="left:1735px;width:260px">广东省深圳市宝安区石岩街道罗租大道44...</div></div><div class="tr" style="top:381px"><div class="td" style="left:0;width:55px"><span class="cb dis"></span></div><div class="td" style="left:55px;width:60px">29</div><div class="td ops" style="left:115px;width:120px"><span class="pin"><svg width="11" height="18" viewBox="0 0 11 18"><path d="M5.5 0.3 C2.5 0.3 0.3 2.6 0.3 5.5 C0.3 8.6 5.5 13.8 5.5 13.8 C5.5 13.8 10.7 8.6 10.7 5.5 C10.7 2.6 8.5 0.3 5.5 0.3 Z" fill="#0858c8"/><circle cx="5.5" cy="5.5" r="1.7" fill="#fff"/><path d="M2.2 15.6 Q5.5 17.9 8.8 15.6" stroke="#0858c8" stroke-width="1.6" fill="none"/></svg></span></div><div class="td" style="left:235px;width:150px">wuzr</div><div class="td" style="left:385px;width:130px">8025500005</div><div class="td" style="left:515px;width:160px">8025500005</div><div class="td red" style="left:675px;width:150px">刷非法卡</div><div class="td" style="left:825px;width:200px">--</div><div class="td" style="left:1025px;width:130px">--</div><div class="td" style="left:1155px;width:160px">2025-12-23 14:51:19</div><div class="td" style="left:1315px;width:160px">2025-12-23 14:51:19</div><div class="td loc" style="left:1475px;width:260px">广东省深圳市宝安区石岩街道罗租大道44...</div><div class="td loc" style="left:1735px;width:260px">广东省深圳市宝安区石岩街道罗租大道44...</div></div><div class="tr" style="top:416px"><div class="td" style="left:0;width:55px"><span class="cb dis"></span></div><div class="td" style="left:55px;width:60px">30</div><div class="td ops" style="left:115px;width:120px"><span class="pin"><svg width="11" height="18" viewBox="0 0 11 18"><path d="M5.5 0.3 C2.5 0.3 0.3 2.6 0.3 5.5 C0.3 8.6 5.5 13.8 5.5 13.8 C5.5 13.8 10.7 8.6 10.7 5.5 C10.7 2.6 8.5 0.3 5.5 0.3 Z" fill="#0858c8"/><circle cx="5.5" cy="5.5" r="1.7" fill="#fff"/><path d="M2.2 15.6 Q5.5 17.9 8.8 15.6" stroke="#0858c8" stroke-width="1.6" fill="none"/></svg></span></div><div class="td" style="left:235px;width:150px">wuzr</div><div class="td" style="left:385px;width:130px">8025500005</div><div class="td" style="left:515px;width:160px">8025500005</div><div class="td red" style="left:675px;width:150px">刷非法卡</div><div class="td" style="left:825px;width:200px">--</div><div class="td" style="left:1025px;width:130px">--</div><div class="td" style="left:1155px;width:160px">2025-12-23 14:51:13</div><div class="td" style="left:1315px;width:160px">2025-12-23 14:51:13</div><div class="td loc" style="left:1475px;width:260px">广东省深圳市宝安区石岩街道罗租大道44...</div><div class="td loc" style="left:1735px;width:260px">广东省深圳市宝安区石岩街道罗租大道44...</div></div><div class="tr" style="top:451px"><div class="td" style="left:0;width:55px"><span class="cb dis"></span></div><div class="td" style="left:55px;width:60px">31</div><div class="td ops" style="left:115px;width:120px"><span class="pin"><svg width="11" height="18" viewBox="0 0 11 18"><path d="M5.5 0.3 C2.5 0.3 0.3 2.6 0.3 5.5 C0.3 8.6 5.5 13.8 5.5 13.8 C5.5 13.8 10.7 8.6 10.7 5.5 C10.7 2.6 8.5 0.3 5.5 0.3 Z" fill="#0858c8"/><circle cx="5.5" cy="5.5" r="1.7" fill="#fff"/><path d="M2.2 15.6 Q5.5 17.9 8.8 15.6" stroke="#0858c8" stroke-width="1.6" fill="none"/></svg></span></div><div class="td" style="left:235px;width:150px">wuzr</div><div class="td" style="left:385px;width:130px">8025500005</div><div class="td" style="left:515px;width:160px">8025500005</div><div class="td red" style="left:675px;width:150px">刷非法卡</div><div class="td" style="left:825px;width:200px">--</div><div class="td" style="left:1025px;width:130px">--</div><div class="td" style="left:1155px;width:160px">2025-12-23 14:50:15</div><div class="td" style="left:1315px;width:160px">2025-12-23 14:50:15</div><div class="td loc" style="left:1475px;width:260px">广东省深圳市宝安区石岩街道罗租大道44...</div><div class="td loc" style="left:1735px;width:260px">广东省深圳市宝安区石岩街道罗租大道44...</div></div><div class="tr" style="top:486px"><div class="td" style="left:0;width:55px"><span class="cb"></span></div><div class="td" style="left:55px;width:60px">32</div><div class="td ops" style="left:115px;width:120px"><span class="pen"><svg width="15" height="15" viewBox="0 0 15 15"><path d="M0.9 9.3 L7 3.2 L11.3 7.5 L4.7 14.1 L0.9 14.1 Z" fill="none" stroke="#1260d0" stroke-width="1.5" stroke-linejoin="round"/><path d="M8.4 1.2 L13.6 6.4" stroke="#1260d0" stroke-width="1.6" stroke-linecap="round"/></svg></span><span class="pin"><svg width="11" height="18" viewBox="0 0 11 18"><path d="M5.5 0.3 C2.5 0.3 0.3 2.6 0.3 5.5 C0.3 8.6 5.5 13.8 5.5 13.8 C5.5 13.8 10.7 8.6 10.7 5.5 C10.7 2.6 8.5 0.3 5.5 0.3 Z" fill="#0858c8"/><circle cx="5.5" cy="5.5" r="1.7" fill="#fff"/><path d="M2.2 15.6 Q5.5 17.9 8.8 15.6" stroke="#0858c8" stroke-width="1.6" fill="none"/></svg></span></div><div class="td" style="left:235px;width:150px">wuzr</div><div class="td" style="left:385px;width:130px">8025500005</div><div class="td" style="left:515px;width:160px">8025500005</div><div class="td red" style="left:675px;width:150px">刷非法卡</div><div class="td" style="left:825px;width:200px">--</div><div class="td" style="left:1025px;width:130px">--</div><div class="td" style="left:1155px;width:160px">2025-12-23 14:49:46</div><div class="td" style="left:1315px;width:160px">2025-12-23 14:49:46</div><div class="td loc" style="left:1475px;width:260px">广东省深圳市宝安区石岩街道罗租大道44...</div><div class="td loc" style="left:1735px;width:260px">广东省深圳市宝安区石岩街道罗租大道44...</div></div><div class="tr" style="top:521px"><div class="td" style="left:0;width:55px"><span class="cb"></span></div><div class="td" style="left:55px;width:60px">33</div><div class="td ops" style="left:115px;width:120px"><span class="pen"><svg width="15" height="15" viewBox="0 0 15 15"><path d="M0.9 9.3 L7 3.2 L11.3 7.5 L4.7 14.1 L0.9 14.1 Z" fill="none" stroke="#1260d0" stroke-width="1.5" stroke-linejoin="round"/><path d="M8.4 1.2 L13.6 6.4" stroke="#1260d0" stroke-width="1.6" stroke-linecap="round"/></svg></span><span class="pin"><svg width="11" height="18" viewBox="0 0 11 18"><path d="M5.5 0.3 C2.5 0.3 0.3 2.6 0.3 5.5 C0.3 8.6 5.5 13.8 5.5 13.8 C5.5 13.8 10.7 8.6 10.7 5.5 C10.7 2.6 8.5 0.3 5.5 0.3 Z" fill="#0858c8"/><circle cx="5.5" cy="5.5" r="1.7" fill="#fff"/><path d="M2.2 15.6 Q5.5 17.9 8.8 15.6" stroke="#0858c8" stroke-width="1.6" fill="none"/></svg></span></div><div class="td" style="left:235px;width:150px">wuzr</div><div class="td" style="left:385px;width:130px">8025500005</div><div class="td" style="left:515px;width:160px">8025500005</div><div class="td green" style="left:675px;width:150px">开后盖</div><div class="td" style="left:825px;width:200px">--</div><div class="td" style="left:1025px;width:130px">--</div><div class="td" style="left:1155px;width:160px">2025-12-23 14:48:33</div><div class="td" style="left:1315px;width:160px">2025-12-23 14:48:33</div><div class="td loc" style="left:1475px;width:260px">广东省深圳市宝安区石岩街道罗租大道44...</div><div class="td loc" style="left:1735px;width:260px">广东省深圳市宝安区石岩街道罗租大道44...</div></div><div class="tr" style="top:556px"><div class="td" style="left:0;width:55px"><span class="cb"></span></div><div class="td" style="left:55px;width:60px">34</div><div class="td ops" style="left:115px;width:120px"><span class="pen"><svg width="15" height="15" viewBox="0 0 15 15"><path d="M0.9 9.3 L7 3.2 L11.3 7.5 L4.7 14.1 L0.9 14.1 Z" fill="none" stroke="#1260d0" stroke-width="1.5" stroke-linejoin="round"/><path d="M8.4 1.2 L13.6 6.4" stroke="#1260d0" stroke-width="1.6" stroke-linecap="round"/></svg></span><span class="pin"><svg width="11" height="18" viewBox="0 0 11 18"><path d="M5.5 0.3 C2.5 0.3 0.3 2.6 0.3 5.5 C0.3 8.6 5.5 13.8 5.5 13.8 C5.5 13.8 10.7 8.6 10.7 5.5 C10.7 2.6 8.5 0.3 5.5 0.3 Z" fill="#0858c8"/><circle cx="5.5" cy="5.5" r="1.7" fill="#fff"/><path d="M2.2 15.6 Q5.5 17.9 8.8 15.6" stroke="#0858c8" stroke-width="1.6" fill="none"/></svg></span></div><div class="td" style="left:235px;width:150px">wuzr</div><div class="td" style="left:385px;width:130px">8025500005</div><div class="td" style="left:515px;width:160px">8025500005</div><div class="td red" style="left:675px;width:150px">刷非法卡</div><div class="td" style="left:825px;width:200px">--</div><div class="td" style="left:1025px;width:130px">--</div><div class="td" style="left:1155px;width:160px">2025-12-23 14:43:51</div><div class="td" style="left:1315px;width:160px">2025-12-23 14:43:51</div><div class="td loc" style="left:1475px;width:260px">广东省深圳市宝安区石岩街道罗租大道44...</div><div class="td loc" style="left:1735px;width:260px">广东省深圳市宝安区石岩街道罗租大道44...</div></div><div class="tr" style="top:591px"><div class="td" style="left:0;width:55px"><span class="cb"></span></div><div class="td" style="left:55px;width:60px">35</div><div class="td ops" style="left:115px;width:120px"><span class="pen"><svg width="15" height="15" viewBox="0 0 15 15"><path d="M0.9 9.3 L7 3.2 L11.3 7.5 L4.7 14.1 L0.9 14.1 Z" fill="none" stroke="#1260d0" stroke-width="1.5" stroke-linejoin="round"/><path d="M8.4 1.2 L13.6 6.4" stroke="#1260d0" stroke-width="1.6" stroke-linecap="round"/></svg></span><span class="pin"><svg width="11" height="18" viewBox="0 0 11 18"><path d="M5.5 0.3 C2.5 0.3 0.3 2.6 0.3 5.5 C0.3 8.6 5.5 13.8 5.5 13.8 C5.5 13.8 10.7 8.6 10.7 5.5 C10.7 2.6 8.5 0.3 5.5 0.3 Z" fill="#0858c8"/><circle cx="5.5" cy="5.5" r="1.7" fill="#fff"/><path d="M2.2 15.6 Q5.5 17.9 8.8 15.6" stroke="#0858c8" stroke-width="1.6" fill="none"/></svg></span></div><div class="td" style="left:235px;width:150px">wuzr</div><div class="td" style="left:385px;width:130px">8025500005</div><div class="td" style="left:515px;width:160px">8025500005</div><div class="td green" style="left:675px;width:150px">开后盖</div><div class="td" style="left:825px;width:200px">--</div><div class="td" style="left:1025px;width:130px">--</div><div class="td" style="left:1155px;width:160px">2025-12-23 14:39:59</div><div class="td" style="left:1315px;width:160px">2025-12-23 14:39:59</div><div class="td loc" style="left:1475px;width:260px">广东省深圳市宝安区石岩街道罗租大道44...</div><div class="td loc" style="left:1735px;width:260px">广东省深圳市宝安区石岩街道罗租大道44...</div></div><div class="tr" style="top:626px"><div class="td" style="left:0;width:55px"><span class="cb"></span></div><div class="td" style="left:55px;width:60px">36</div><div class="td ops" style="left:115px;width:120px"><span class="pen"><svg width="15" height="15" viewBox="0 0 15 15"><path d="M0.9 9.3 L7 3.2 L11.3 7.5 L4.7 14.1 L0.9 14.1 Z" fill="none" stroke="#1260d0" stroke-width="1.5" stroke-linejoin="round"/><path d="M8.4 1.2 L13.6 6.4" stroke="#1260d0" stroke-width="1.6" stroke-linecap="round"/></svg></span><span class="pin"><svg width="11" height="18" viewBox="0 0 11 18"><path d="M5.5 0.3 C2.5 0.3 0.3 2.6 0.3 5.5 C0.3 8.6 5.5 13.8 5.5 13.8 C5.5 13.8 10.7 8.6 10.7 5.5 C10.7 2.6 8.5 0.3 5.5 0.3 Z" fill="#0858c8"/><circle cx="5.5" cy="5.5" r="1.7" fill="#fff"/><path d="M2.2 15.6 Q5.5 17.9 8.8 15.6" stroke="#0858c8" stroke-width="1.6" fill="none"/></svg></span></div><div class="td" style="left:235px;width:150px">wuzr</div><div class="td" style="left:385px;width:130px">8025500005</div><div class="td" style="left:515px;width:160px">8025500005</div><div class="td red" style="left:675px;width:150px">刷非法卡</div><div class="td" style="left:825px;width:200px">--</div><div class="td" style="left:1025px;width:130px">--</div><div class="td" style="left:1155px;width:160px">2025-12-23 14:36:29</div><div class="td" style="left:1315px;width:160px">2025-12-23 14:36:29</div><div class="td loc" style="left:1475px;width:260px">广东省深圳市宝安区石岩街道罗租大道44...</div><div class="td loc" style="left:1735px;width:260px">广东省深圳市宝安区石岩街道罗租大道44...</div></div><div class="tr" style="top:661px"><div class="td" style="left:0;width:55px"><span class="cb"></span></div><div class="td" style="left:55px;width:60px">37</div><div class="td ops" style="left:115px;width:120px"><span class="pen"><svg width="15" height="15" viewBox="0 0 15 15"><path d="M0.9 9.3 L7 3.2 L11.3 7.5 L4.7 14.1 L0.9 14.1 Z" fill="none" stroke="#1260d0" stroke-width="1.5" stroke-linejoin="round"/><path d="M8.4 1.2 L13.6 6.4" stroke="#1260d0" stroke-width="1.6" stroke-linecap="round"/></svg></span><span class="pin"><svg width="11" height="18" viewBox="0 0 11 18"><path d="M5.5 0.3 C2.5 0.3 0.3 2.6 0.3 5.5 C0.3 8.6 5.5 13.8 5.5 13.8 C5.5 13.8 10.7 8.6 10.7 5.5 C10.7 2.6 8.5 0.3 5.5 0.3 Z" fill="#0858c8"/><circle cx="5.5" cy="5.5" r="1.7" fill="#fff"/><path d="M2.2 15.6 Q5.5 17.9 8.8 15.6" stroke="#0858c8" stroke-width="1.6" fill="none"/></svg></span></div><div class="td" style="left:235px;width:150px">wuzr</div><div class="td" style="left:385px;width:130px">8025500005</div><div class="td" style="left:515px;width:160px">8025500005</div><div class="td red" style="left:675px;width:150px">刷非法卡</div><div class="td" style="left:825px;width:200px">--</div><div class="td" style="left:1025px;width:130px">--</div><div class="td" style="left:1155px;width:160px">2025-12-23 14:35:24</div><div class="td" style="left:1315px;width:160px">2025-12-23 14:35:24</div><div class="td loc" style="left:1475px;width:260px">广东省深圳市宝安区石岩街道罗租大道44...</div><div class="td loc" style="left:1735px;width:260px">广东省深圳市宝安区石岩街道罗租大道44...</div></div></div>
<div id="vscroll"></div>
<div id="vthumb"></div>
<div id="hscroll"></div>
<div id="hthumb"></div>
<svg class="abs" style="left:54px;top:504px" width="16" height="79" viewBox="0 0 16 79"><path d="M1 0.5 L12 7 Q14.5 8.5 14.5 11.5 L14.5 67 Q14.5 70 12 71.5 L1 78.5 Z" fill="#fafafa" stroke="#cfcfcf"/><path d="M4.5 31 L10.5 39 L4.5 47" fill="none" stroke="#0050c0" stroke-width="1.6"/></svg>
<!-- pagination -->
<svg class="abs" style="left:82px;top:927px" width="8" height="12" viewBox="0 0 8 12"><path d="M6.5 1 L1.5 6 L6.5 11" fill="none" stroke="#c0c4cc" stroke-width="1.4"/></svg>
<div class="pg" style="left:107px;width:35px;background:#68aee0;color:#fff;font-weight:bold">1</div>
<div class="pg" style="left:150px;width:20px;font-weight:bold">2</div>
<div class="pg" style="left:185px;width:20px;font-weight:bold">3</div>
<svg class="abs" style="left:230px;top:927px" width="8" height="12" viewBox="0 0 8 12"><path d="M1.5 1.5 L6 6 L1.5 10.5" fill="none" stroke="#303133" stroke-width="1.4"/></svg>
<div class="pg" style="left:272px;color:#606266">前往</div>
<div class="pg" style="left:303px;width:46px;border:1px solid #dcdfe6;border-radius:4px;background:#fff;line-height:26px;color:#606266">1</div>
<div class="pg" style="left:352px;color:#606266">页</div>
<div class="pg" style="left:375px;color:#606266">共 110 条</div>
<div class="pg" style="left:444px;width:100px;border:1px solid #dcdfe6;border-radius:4px;background:#fff;line-height:26px;color:#606266;text-align:left;padding-left:19px">50条/页</div>
<svg class="abs" style="left:527px;top:929px" width="10" height="7" viewBox="0 0 10 7"><path d="M1 1.5 L5 5.5 L9 1.5" fill="none" stroke="#c0c4cc" stroke-width="1.2"/></svg>

<!-- notifications -->
<div class="notif" style="top:644px;height:171px">
  <div class="nico" style="top:17px;background:#e03232;font-size:15px;line-height:20px">!</div>
  <div class="ntitle" style="left:39px;top:17px;color:#e00000">刷非法卡</div>
  <div class="abs" style="left:112px;top:20px;font-size:14px;color:#4a1ad8;text-decoration:underline;white-space:nowrap">立即处理</div>
  <svg class="abs" style="left:179px;top:19.5px" width="12" height="16" viewBox="0 0 12 16"><path d="M6 0.5 Q7 4 9.5 6.5 Q11.5 9 11 12 Q10 15.5 6 15.5 Q2 15.5 1 12 Q0.5 9 3 7 Q3 9.5 4.5 10 Q3.5 5 6 0.5 Z" fill="#f05a1a"/></svg>
  <div class="abs" style="left:192px;top:20px;font-size:14px;color:#e00000">+2</div>
  <svg class="nclose" style="top:15px" width="11" height="11" viewBox="0 0 11 11"><path d="M0.5 0.5 L10.5 10.5 M10.5 0.5 L0.5 10.5" stroke="#909399" stroke-width="1.2"/></svg>
  <div class="nline" style="top:49px;font-weight:bold;color:#555">设备: 8025500005(8025500005)</div>
  <div class="nline" style="top:73px"><b>时间:</b> 2025-12-24 14:06:27</div>
  <div class="nline" style="top:96px"><b>经纬度:</b> 22.67666866,113.92886498</div>
  <div class="nline" style="top:117px;white-space:normal;width:375px;line-height:20px"><b>位置:</b> 广东省深圳市宝安区石岩街道罗租大道44号罗租桥头岭-二区北118米</div>
</div>
<div class="notif" style="top:832px;height:105px">
  <div class="nico" style="top:18px;background:#2ca02c;font-size:14px;line-height:20px;font-style:italic;font-family:'Liberation Serif',serif">i</div>
  <div class="ntitle" style="left:41px;top:18px;color:#333">开锁(刷卡)</div>
  <svg class="nclose" style="top:12px" width="11" height="11" viewBox="0 0 11 11"><path d="M0.5 0.5 L10.5 10.5 M10.5 0.5 L0.5 10.5" stroke="#909399" stroke-width="1.2"/></svg>
  <div class="nline" style="left:41px;top:47px;font-weight:bold;color:#555">设备: 8025500005(8025500005)</div>
  <div class="nline" style="left:41px;top:71px"><b>时间:</b> 2025-12-24 14:06:07</div>
</div>

<div id="overlay" class="abs"></div>

<!-- modal -->
<div id="modal">
  <div id="mhead">报警处理</div>
  <svg class="abs" style="left:866px;top:14px" width="12" height="12" viewBox="0 0 12 12"><path d="M1 1 L11 11 M11 1 L1 11" stroke="#fff" stroke-width="1.6"/></svg>
  <div class="card" style="top:55px">
    <div class="cline" style="left:15px;top:8px"><b>消息类型：</b>刷非法卡</div>
    <div class="cline" style="left:15px;top:32px"><b>时间：</b>2025-12-24 14:06:11</div>
    <div class="cline" style="left:15px;top:56px"><b>位置：</b>广东省深圳市宝安区石岩街道罗租大道44号罗租桥头岭-二区北118米</div>
    <div class="cline" style="left:435px;top:8px"><b>设备：</b>8025500005(8025500005)</div>
    <div class="cline" style="left:435px;top:32px"><b>经纬度：</b>22.67666866,113.92886498</div>
  </div>
  <div class="card" style="top:157px">
    <div class="cline" style="left:15px;top:8px"><b>消息类型：</b>刷非法卡</div>
    <div class="cline" style="left:15px;top:32px"><b>时间：</b>2025-12-24 14:06:27</div>
    <div class="cline" style="left:15px;top:56px"><b>位置：</b>广东省深圳市宝安区石岩街道罗租大道44号罗租桥头岭-二区北118米</div>
    <div class="cline" style="left:435px;top:8px"><b>设备：</b>8025500005(8025500005)</div>
    <div class="cline" style="left:435px;top:32px"><b>经纬度：</b>22.67666866,113.92886498</div>
  </div>
  <div class="abs" style="left:15px;top:275px;font-size:13px;font-weight:bold;color:#555">处理意见：</div>
  <div class="abs" style="left:15px;top:298px;width:870px;height:54px;border:1px solid #409eff;border-radius:4px;background:#fff">
    <div class="abs" style="left:15px;top:7px;font-size:14px;color:#606266">已查证</div>
    <div class="abs" style="left:819px;top:37px;font-size:12px;color:#909399">3/100</div>
    <svg class="abs" style="left:858px;top:42px" width="9" height="9" viewBox="0 0 9 9"><path d="M8.5 1 L1 8.5 M8.5 5 L5 8.5" stroke="#777" stroke-width="0.9"/></svg>
  </div>
  <div id="mfoot">
    <div class="mbtn" style="left:680px;border:1px solid #dcdfe6;background:#fff;color:#606266">取消</div>
    <div class="mbtn" style="left:790px;background:#409eff;color:#fff;line-height:35px">处理</div>
  </div>
</div>
</body></html>
